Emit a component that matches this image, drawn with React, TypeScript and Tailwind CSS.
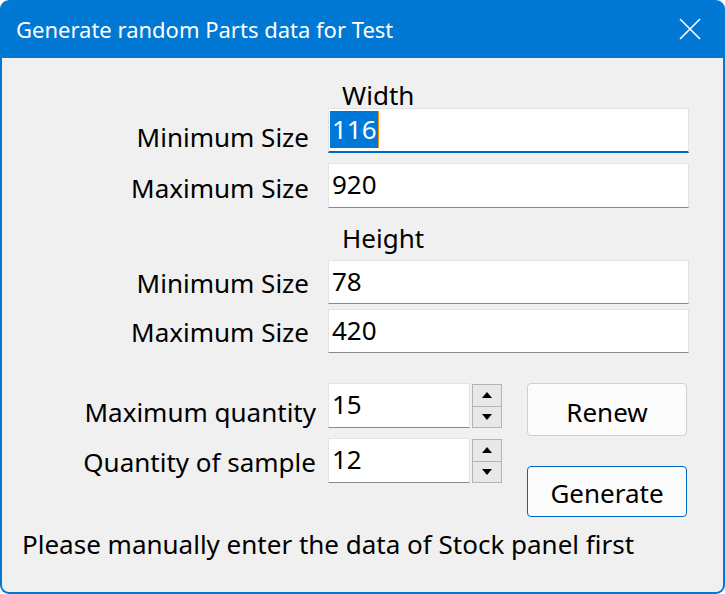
import React from 'react';

const font = { fontFamily: '"Noto Sans", "Open Sans", sans-serif' };

function TextBox({ value, focused, w = 'w-[361px]', h = 'h-[45px]' }: { value: string; focused?: boolean; w?: string; h?: string }) {
  return (
    <div
      className={`${w} ${h} bg-white border border-[#e3e3e3] pl-[1px] text-[26px] text-black ${
        focused ? 'border-b-2 border-b-[#0067c0]' : 'border-b-[#8a8a8a]'
      }`}
    >
      {focused ? (
        <span className="inline-block mt-[2px] leading-[37px] bg-[#0078d7] text-white pl-[2px] pr-[1px] border-r border-r-[#ff8c00]">
          {value}
        </span>
      ) : (
        <span className="inline-block mt-[2px] leading-[37px] pl-[2px]">{value}</span>
      )}
    </div>
  );
}

function Spinner() {
  return (
    <div className="w-[30px] h-[44px] flex flex-col ml-[2px] mt-[1px]">
      <div className="flex-1 bg-[#e8e8e8] border border-[#b4b4b4] flex items-center justify-center">
        <svg width="10" height="6" viewBox="0 0 10 6"><path d="M0 6 L5 0 L10 6 Z" fill="#000" /></svg>
      </div>
      <div className="flex-1 bg-[#e8e8e8] border border-t-0 border-[#b4b4b4] flex items-center justify-center">
        <svg width="10" height="6" viewBox="0 0 10 6"><path d="M0 0 L5 6 L10 0 Z" fill="#000" /></svg>
      </div>
    </div>
  );
}

function Row({
  label,
  children,
  labelW = 'w-[307px]',
  gap = 'ml-[19px]',
  pt = 'pt-[16px]',
}: {
  label: string;
  children: React.ReactNode;
  labelW?: string;
  gap?: string;
  pt?: string;
}) {
  return (
    <div className="flex items-start">
      <div className={`${labelW} ${pt} text-right text-[26px] leading-none text-black whitespace-nowrap`}>{label}</div>
      <div className={`${gap} flex`}>{children}</div>
    </div>
  );
}

export default function App() {
  return (
    <div className="w-[725px] h-[594px] bg-[#0078d4] rounded-[9px] flex flex-col px-[2px] pb-[2px]" style={font}>
      <div className="h-[58px] flex items-center justify-between pl-[14px] pr-[22px] text-white">
        <span className="text-[22px] pt-[1px]">Generate random Parts data for Test</span>
        <svg width="22" height="22" viewBox="0 0 22 22" stroke="#fff" strokeWidth="1.6">
          <path d="M1 1 L21 21 M21 1 L1 21" />
        </svg>
      </div>
      <div className="flex-1 bg-[#f0f0f0] rounded-b-[7px] flex flex-col text-black">
        <div className="pl-[340px] pt-[24px] h-[50px] text-[26px] leading-none">Width</div>
        <Row label="Minimum Size">
          <TextBox value="116" focused />
        </Row>
        <div className="h-[10px]" />
        <Row label="Maximum Size" pt="pt-[12px]">
          <TextBox value="920" />
        </Row>
        <div className="pl-[340px] pt-[17px] h-[52px] text-[26px] leading-none">Height</div>
        <Row label="Minimum Size" pt="pt-[10px]">
          <TextBox value="78" h="h-[44px]" />
        </Row>
        <div className="h-[5px]" />
        <Row label="Maximum Size" pt="pt-[10px]">
          <TextBox value="420" h="h-[44px]" />
        </Row>
        <div className="h-[30px]" />
        <div className="flex">
          <div className="flex flex-col">
            <Row label="Maximum quantity" labelW="w-[314px]" gap="ml-[12px]">
              <TextBox value="15" w="w-[142px]" />
              <Spinner />
            </Row>
            <div className="h-[10px]" />
            <Row label="Quantity of sample" labelW="w-[314px]" gap="ml-[12px]" pt="pt-[11px]">
              <TextBox value="12" w="w-[142px]" />
              <Spinner />
            </Row>
          </div>
          <div className="ml-[25px] flex flex-col">
            <button className="w-[160px] h-[53px] bg-[#fbfbfb] border border-[#d0d0d0] rounded-[4px] text-[26px] leading-none pt-[4px]">
              Renew
            </button>
            <button className="w-[160px] h-[51px] mt-[30px] bg-[#fbfbfb] border border-[#0067c0] rounded-[4px] text-[26px] leading-none pt-[3px]">
              Generate
            </button>
          </div>
        </div>
        <div className="pl-[20px] pt-[14px] text-[26px] leading-none whitespace-nowrap">
          Please manually enter the data of Stock panel first
        </div>
      </div>
    </div>
  );
}
